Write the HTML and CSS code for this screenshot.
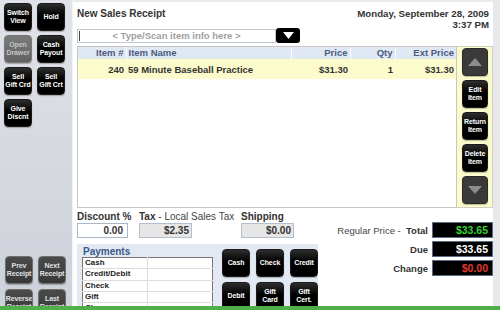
FILE: index.html
```html
<!DOCTYPE html>
<html lang="en">
<head>
    <meta charset="UTF-8">
    <meta name="viewport" content="width=device-width, initial-scale=1.0">
    <title>New Sales Receipt</title>
    <link rel="stylesheet" href="styles.css">
</head>
<body>
    <div class="screen">
        <div class="app">
            <!-- Left command column -->
            <aside class="sidebar">
                <div class="key-grid">
                    <button class="key">Switch<br>View</button>
                    <button class="key">Hold</button>
                    <button class="key key-off">Open<br>Drawer</button>
                    <button class="key">Cash<br>Payout</button>
                    <button class="key">Sell<br>Gift Crd</button>
                    <button class="key">Sell<br>Gift Crt</button>
                    <button class="key">Give<br>Discnt</button>
                </div>
                <div class="key-grid nav-keys">
                    <button class="key key-gray">Prev<br>Receipt</button>
                    <button class="key key-gray">Next<br>Receipt</button>
                    <button class="key key-gray">Reverse<br>Receipt</button>
                    <button class="key key-gray">Last<br>Receipt</button>
                </div>
            </aside>

            <main class="receipt">
                <div class="receipt-head">
                    <h1>New Sales Receipt</h1>
                    <div class="stamp">Monday, September 28, 2009<br>3:37 PM</div>
                </div>

                <div class="scan-row">
                    <div class="scan-input"><span class="caret"></span>&lt; Type/Scan item info here &gt;</div>
                    <button class="scan-drop">
                        <svg width="11" height="7" viewBox="0 0 11 7"><polygon points="0,0 11,0 5.5,7" fill="#fff"/></svg>
                    </button>
                </div>

                <!-- Item lines -->
                <div class="items">
                    <div class="items-box">
                        <table class="lines">
                            <colgroup>
                                <col style="width:48px">
                                <col style="width:165px">
                                <col style="width:59px">
                                <col style="width:45px">
                                <col style="width:61px">
                            </colgroup>
                            <thead>
                                <tr>
                                    <th class="num">Item #</th>
                                    <th class="name">Item Name</th>
                                    <th class="num">Price</th>
                                    <th class="num">Qty</th>
                                    <th class="num">Ext Price</th>
                                </tr>
                            </thead>
                            <tbody>
                                <tr>
                                    <td class="num">240</td>
                                    <td class="name">59 Minute Baseball Practice</td>
                                    <td class="num">$31.30</td>
                                    <td class="num">1</td>
                                    <td class="num">$31.30</td>
                                </tr>
                            </tbody>
                        </table>
                    </div>
                    <div class="item-keys">
                        <button class="key key-arrow">
                            <svg width="14" height="8" viewBox="0 0 14 8"><polygon points="0,8 14,8 7,0" fill="#8c8c8c"/></svg>
                        </button>
                        <button class="key">Edit<br>Item</button>
                        <button class="key">Return<br>Item</button>
                        <button class="key">Delete<br>Item</button>
                        <button class="key key-arrow">
                            <svg width="14" height="8" viewBox="0 0 14 8"><polygon points="0,0 14,0 7,8" fill="#8c8c8c"/></svg>
                        </button>
                    </div>
                </div>

                <div class="lower">
                    <div class="lower-left">
                        <div class="fields">
                            <div class="field f-discount">
                                <div class="field-label">Discount %</div>
                                <div class="field-box box-edit">0.00</div>
                            </div>
                            <div class="field f-tax">
                                <div class="field-label">Tax <span class="thin">- Local Sales Tax</span></div>
                                <div class="field-box">$2.35</div>
                            </div>
                            <div class="field">
                                <div class="field-label">Shipping</div>
                                <div class="field-box">$0.00</div>
                            </div>
                        </div>

                        <!-- Payments -->
                        <div class="payments">
                            <div class="pay-list">
                                <div class="pay-title">Payments</div>
                                <table class="pay-table">
                                    <tr><td>Cash</td><td></td></tr>
                                    <tr><td>Credit/Debit</td><td></td></tr>
                                    <tr><td>Check</td><td></td></tr>
                                    <tr><td>Gift</td><td></td></tr>
                                    <tr><td>Charge</td><td></td></tr>
                                </table>
                            </div>
                            <div class="pay-keys">
                                <button class="key">Cash</button>
                                <button class="key">Check</button>
                                <button class="key">Credit</button>
                                <button class="key">Debit</button>
                                <button class="key">Gift<br>Card</button>
                                <button class="key">Gift<br>Cert.</button>
                            </div>
                        </div>
                    </div>

                    <div class="totals">
                        <div class="total-row">
                            <span class="total-label"><span class="thin">Regular Price -</span>&nbsp; Total</span>
                            <span class="total-box green">$33.65</span>
                        </div>
                        <div class="total-row">
                            <span class="total-label">Due</span>
                            <span class="total-box">$33.65</span>
                        </div>
                        <div class="total-row">
                            <span class="total-label">Change</span>
                            <span class="total-box red">$0.00</span>
                        </div>
                    </div>
                </div>
            </main>
            <div class="edge"></div>
        </div>
        <div class="status-bar"></div>
    </div>
</body>
</html>
```

FILE: styles.css
```css
body {
    margin: 0;
    font-family: 'Liberation Sans', Arial, sans-serif;
    color: #333;
    background: #fff;
}
.screen {
    width: 500px;
    height: 310px;
    display: flex;
    flex-direction: column;
    overflow: hidden;
}
.app {
    flex: 1;
    min-height: 0;
    display: flex;
    overflow: hidden;
}
.status-bar {
    height: 4px;
    flex-shrink: 0;
    background: #50ae4b;
}
/* Sidebar */
.sidebar {
    width: 73px;
    flex-shrink: 0;
    box-sizing: border-box;
    padding: 3px 0 0 4px;
    background: linear-gradient(#e0e3e9, #d6d9e0 50%, #cdd1d9);
    border-right: 1px solid #f3f4f7;
}
.key-grid {
    display: grid;
    grid-template-columns: 28px 28px;
    grid-auto-rows: 28px;
    column-gap: 5px;
    row-gap: 4px;
}
.nav-keys {
    margin-top: 129px;
    padding-left: 1px;
    row-gap: 5px;
}
.key {
    width: 28px;
    height: 28px;
    padding: 0;
    box-sizing: border-box;
    border: 1px solid #1a1a1a;
    border-radius: 4px;
    background: linear-gradient(#2e2e2e, #000 45%, #000);
    color: #fff;
    font-family: 'Liberation Sans', Arial, sans-serif;
    font-weight: bold;
    font-size: 7px;
    line-height: 8.5px;
    letter-spacing: -0.1px;
    white-space: nowrap;
    display: flex;
    align-items: center;
    justify-content: center;
    text-align: center;
    box-shadow: 0 1px 1px rgba(0, 0, 0, 0.25);
}
.key-off {
    background: linear-gradient(#7a7a7a, #626262);
    border-color: #777;
    color: #c4c4c4;
}
.key-gray {
    background: linear-gradient(#4a4a4a, #383838);
    border-color: #707070;
    color: #e2e2e2;
}
.key-arrow {
    background: #3a3a3a;
    border-color: #2a2a2a;
}
/* Main receipt */
.receipt {
    width: 420px;
    flex-shrink: 0;
    box-sizing: border-box;
    padding-left: 4px;
    border-top: 2px solid #e9ebef;
}
.receipt-head {
    height: 26px;
    box-sizing: border-box;
    padding: 6px 4px 0 0;
    display: flex;
    justify-content: space-between;
    align-items: flex-start;
}
h1 {
    margin: 0;
    font-size: 10px;
    line-height: 12px;
    font-weight: bold;
    color: #333;
}
.stamp {
    font-size: 9.7px;
    line-height: 11px;
    font-weight: bold;
    text-align: right;
    color: #333;
}
.scan-row {
    display: flex;
    align-items: center;
    height: 15px;
}
.scan-input {
    position: relative;
    width: 199px;
    height: 14px;
    box-sizing: border-box;
    border: 1px solid #c2c8d2;
    font-size: 9.5px;
    line-height: 12px;
    font-weight: bold;
    color: #a0a0a0;
    text-align: center;
}
.caret {
    position: absolute;
    left: 1px;
    top: 1px;
    width: 1px;
    height: 10px;
    background: #444;
}
.scan-drop {
    width: 24px;
    height: 15px;
    padding: 0;
    border: none;
    border-radius: 3px;
    background: #000;
    display: flex;
    align-items: center;
    justify-content: center;
}
/* Item lines */
.items {
    display: flex;
    margin-top: 3px;
    height: 162px;
}
.items-box {
    width: 380px;
    box-sizing: border-box;
    border: 1px solid #c6c6c6;
    background: #fff;
}
.lines {
    width: 100%;
    table-layout: fixed;
    border-collapse: collapse;
    font-size: 9.5px;
    font-weight: bold;
}
.lines th {
    height: 12px;
    padding: 0 3px;
    background: #e0e8f4;
    color: #4a5c7e;
    border-right: 1px solid #fff;
    line-height: 12px;
}
.lines th:last-child {
    border-right: none;
}
.lines td {
    height: 20px;
    padding: 0 3px;
    background: #fcfbcc;
    color: #333;
    white-space: nowrap;
}
.lines .num {
    text-align: right;
    padding-right: 2px;
}
.lines .name {
    text-align: left;
    padding-left: 2px;
}
.item-keys {
    width: 36px;
    box-sizing: border-box;
    padding: 1px 4px 0 5px;
    background: #fcfbcc;
    border: 1px solid #cfcfc4;
    border-left: none;
    display: flex;
    flex-direction: column;
    gap: 4px;
}
.item-keys .key {
    width: 26px;
}
/* Lower part */
.lower {
    display: flex;
    justify-content: space-between;
}
.lower-left {
    width: 241px;
}
.fields {
    display: flex;
    margin-top: 3px;
}
.field-label {
    font-size: 10px;
    line-height: 12px;
    font-weight: bold;
    color: #333;
    white-space: nowrap;
}
.thin {
    font-weight: normal;
    color: #444;
}
.f-discount {
    width: 62px;
}
.f-tax {
    width: 102px;
}
.field-box {
    width: 53px;
    height: 15px;
    box-sizing: border-box;
    border: 1px solid #b4bfce;
    background: #e6e6e6;
    font-size: 10px;
    line-height: 13px;
    font-weight: bold;
    text-align: right;
    padding-right: 2px;
}
.box-edit {
    width: 51px;
    background: #fff;
    border-color: #a9b6c8;
    padding-right: 4px;
}
.payments {
    margin-top: 6px;
    height: 80px;
    background: #e2e9f3;
    display: flex;
}
.pay-list {
    width: 136px;
    padding-left: 5px;
}
.pay-title {
    padding: 2px 0 0 1px;
    font-size: 10px;
    line-height: 11px;
    font-weight: bold;
    color: #3b5a8c;
}
.pay-table {
    width: 131px;
    border-collapse: collapse;
    background: #fff;
    border: 1px solid #777;
    font-size: 8px;
    font-weight: bold;
    color: #222;
}
.pay-table td {
    height: 10.3px;
    padding: 0 0 0 2px;
    border-bottom: 1px solid #dcdcdc;
    line-height: 10px;
}
.pay-table td:first-child {
    width: 62px;
    border-right: 1px solid #dcdcdc;
}
.pay-keys {
    display: grid;
    grid-template-columns: 28px 28px 28px;
    grid-auto-rows: 28px;
    column-gap: 6px;
    row-gap: 5px;
    margin: 5px 0 0 5px;
}
/* Totals */
.totals {
    margin-top: 14px;
    display: flex;
    flex-direction: column;
    gap: 3px;
}
.total-row {
    display: flex;
    justify-content: flex-end;
    align-items: center;
    gap: 4px;
}
.total-label {
    font-size: 9.5px;
    font-weight: bold;
    color: #333;
}
.total-box {
    width: 61px;
    height: 16px;
    box-sizing: border-box;
    border: 1px solid #5d6c86;
    background: #000;
    color: #fff;
    font-size: 10.5px;
    line-height: 14px;
    font-weight: bold;
    text-align: right;
    padding-right: 4px;
}
.total-box.green {
    color: #2fd52f;
}
.total-box.red {
    color: #e03a2e;
}
.edge {
    flex: 1;
    background: #e6e8ed;
}
```
